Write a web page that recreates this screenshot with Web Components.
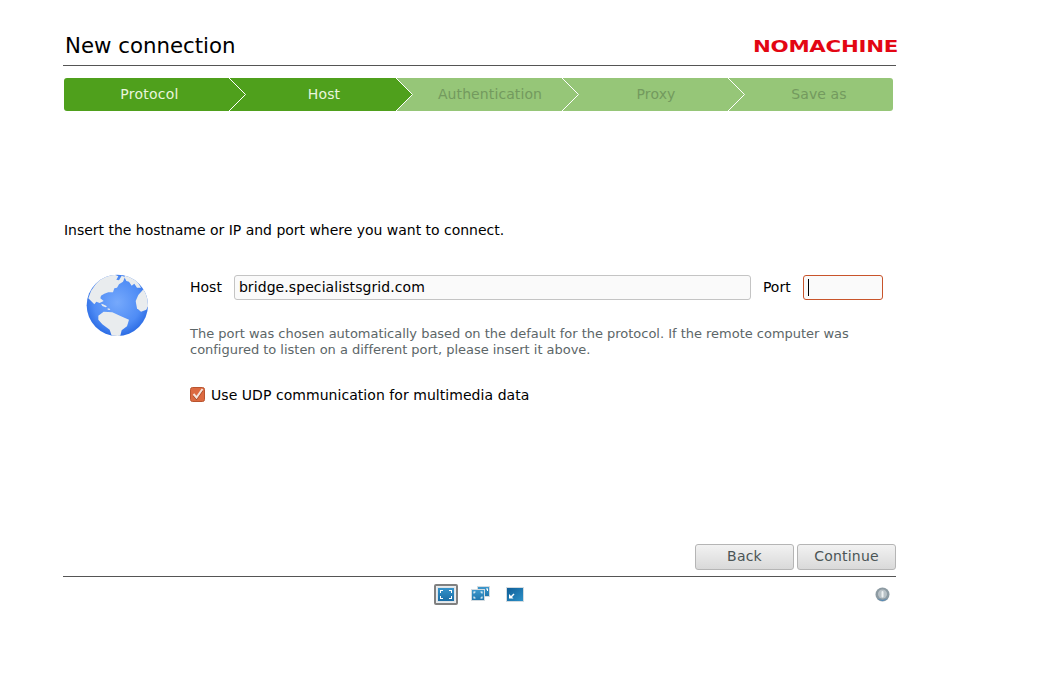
<!DOCTYPE html>
<html>
<head>
<meta charset="utf-8">
<title>New connection</title>
<style>
html, body { margin: 0; background: #fff; }
body { font-family: "DejaVu Sans", sans-serif; color: #000; }
</style>
</head>
<body>
<nx-page>
	<nx-header slot="header" title="New connection"></nx-header>
	<nx-steps slot="steps">
		<nx-step active first>Protocol</nx-step>
		<nx-step active>Host</nx-step>
		<nx-step>Authentication</nx-step>
		<nx-step>Proxy</nx-step>
		<nx-step last>Save as</nx-step>
	</nx-steps>
	<nx-host-form slot="main" host="bridge.specialistsgrid.com"></nx-host-form>
	<nx-footer slot="footer"></nx-footer>
</nx-page>

<script>
class nxPage extends HTMLElement {
	constructor() {
		super();
		this.attachShadow({ mode: 'open' });
		this.shadowRoot.innerHTML = `
		<style>
		:host { display: block; width: 833px; height: 674px; margin-left: 63px; }
		.wrap { display: flex; flex-direction: column; height: 100%; }
		.main { flex: 1; }
		</style>
		<div class="wrap">
			<slot name="header"></slot>
			<slot name="steps"></slot>
			<div class="main"><slot name="main"></slot></div>
			<slot name="footer"></slot>
		</div>`;
	}
}

class nxHeader extends HTMLElement {
	constructor() {
		super();
		this.attachShadow({ mode: 'open' });
		this.shadowRoot.innerHTML = `
		<style>
		:host { display: flex; justify-content: space-between; align-items: center; box-sizing: border-box; height: 66px; padding: 33px 0 6px 2px; border-bottom: 1px solid #555; }
		h1 { margin: 0; font: normal 21.3px/26px "DejaVu Sans", sans-serif; color: #000; }
		.logo { width: 144px; height: 14px; margin-right: -1px; }
		.logo span { display: block; width: max-content; font: bold 14px/14px "DejaVu Sans", sans-serif; color: #e30613; white-space: nowrap; transform-origin: 0 50%; transform: scale(1.525, 1.15); letter-spacing: -0.2px; }
		</style>
		<h1></h1>
		<div class="logo"><span>NOMACHINE</span></div>`;
		this.shadowRoot.querySelector('h1').innerText = this.getAttribute('title');
	}
}

class nxSteps extends HTMLElement {
	constructor() {
		super();
		this.attachShadow({ mode: 'open' });
		this.shadowRoot.innerHTML = `
		<style>
		:host { display: flex; height: 33px; width: 829px; margin: 12px 0 0 1px; border-radius: 3px; overflow: hidden; }
		</style>
		<slot></slot>`;
	}
}

class nxStep extends HTMLElement {
	constructor() {
		super();
		this.attachShadow({ mode: 'open' });
		this.shadowRoot.innerHTML = `
		<style>
		:host { display: flex; align-items: center; justify-content: center; position: relative; box-sizing: border-box; width: 166px; height: 33px; padding: 0 0 2px 20px; font-size: 14px; letter-spacing: 0.1px; background: #96c678; color: #739a5e; }
		:host([active]) { background: #4fa01c; color: #e9f5dd; width: 167px; padding-left: 21px; }
		:host([first]) { width: 166px; padding-left: 5px; letter-spacing: 0.25px; }
		:host([last]) { width: 164px; padding-left: 16px; }
		svg { position: absolute; right: -17px; top: 0; z-index: 1; }
		:host([last]) svg { display: none; }
		</style>
		<slot></slot>
		<svg width="18" height="33" viewBox="0 0 18 33">
			<path class="fill" d="M0 0L16.5 16.5L0 33Z"/>
			<path d="M0 0L16.5 16.5L0 33" fill="none" stroke="#fff" stroke-width="1"/>
		</svg>`;
		const fill = this.hasAttribute('active') ? '#4fa01c' : '#96c678';
		this.shadowRoot.querySelector('.fill').setAttribute('fill', fill);
	}
}

class nxGlobe extends HTMLElement {
	constructor() {
		super();
		this.attachShadow({ mode: 'open' });
		this.shadowRoot.innerHTML = `
		<style>:host { display: block; width: 76px; height: 76px; }</style>
		<svg width="76" height="76" viewBox="0 0 228 228">
			<defs>
				<radialGradient id="sea" cx="0.5" cy="0.45" r="0.55">
					<stop offset="0" stop-color="#76a9fc"/>
					<stop offset="0.7" stop-color="#4f8cf5"/>
					<stop offset="1" stop-color="#2c6ce4"/>
				</radialGradient>
				<clipPath id="ball"><circle cx="115" cy="115" r="92"/></clipPath>
			</defs>
			<circle cx="115" cy="115" r="92" fill="url(#sea)"/>
			<g fill="#e9ecee" clip-path="url(#ball)">
				<path d="M66 34L84 26L104 22L118 28L112 38L120 40L128 26L138 30L132 44L120 52L114 62L106 64L102 76L88 76L76 80L66 86L64 94L74 102L62 108L52 104L46 112L34 100L28 94L36 72L50 52Z"/>
				<path d="M140 22L156 26L174 42L186 62L174 62L166 50L158 56L150 44L142 42L136 30Z"/>
				<path d="M178 84L194 66L206 84L212 108L202 128L186 134L174 124L170 102Z"/>
				<path d="M58 146L74 134L100 136L126 148L150 158L144 178L128 190L122 214L100 212L92 188L70 172L58 158Z"/>
				<path d="M66 110L72 112L84 118L80 121L70 117Z"/>
				<path d="M86 124L94 126L92 129L86 128Z"/>
			</g>
		</svg>`;
	}
}

class nxHostForm extends HTMLElement {
	constructor() {
		super();
		this.attachShadow({ mode: 'open' });
		this.shadowRoot.innerHTML = `
		<style>
		:host { display: block; padding: 111px 0 0 1px; font-size: 14px; color: #000; }
		p { margin: 0; }
		.intro { line-height: 17px; letter-spacing: -0.02px; }
		.body { display: flex; margin-top: 35px; }
		nx-globe { margin: -7px 35px 0 15px; flex: none; }
		.col { width: 694px; }
		.row { display: flex; align-items: flex-end; height: 26px; }
		.row span { align-self: center; }
		.field { box-sizing: border-box; height: 25px; border: 1px solid #c4c4c4; border-radius: 3px; background: #fafafa; padding-left: 4px; line-height: 22px; }
		.host { width: 517px; margin: 0 12px 0 12px; letter-spacing: 0.08px; }
		.port { width: 80px; margin-left: 12px; border-color: #c8542b; position: relative; }
		.caret { position: absolute; left: 4px; top: 3px; width: 1px; height: 17px; background: #000; }
		.note { margin-top: 26px; font-size: 13px; line-height: 16px; color: #5c6668; letter-spacing: -0.02px; }
		.udp { display: flex; align-items: center; gap: 6px; margin-top: 28px; height: 17px; letter-spacing: 0.05px; }
		.box { width: 15px; height: 15px; }
		</style>
		<p class="intro">Insert the hostname or IP and port where you want to connect.</p>
		<div class="body">
			<nx-globe></nx-globe>
			<div class="col">
				<div class="row">
					<span>Host</span>
					<div class="field host"></div>
					<span>Port</span>
					<div class="field port"><div class="caret"></div></div>
				</div>
				<p class="note">The port was chosen automatically based on the default for the protocol. If the remote computer was configured to listen on a different port, please insert it above.</p>
				<div class="udp">
					<svg class="box" viewBox="0 0 15 15">
						<rect x="0.5" y="0.5" width="14" height="14" rx="2" fill="#dc6a41" stroke="#b9542f"/>
						<path d="M3.500 8.500L6.500 12L12.500 3.500" fill="none" stroke="#9c4423" stroke-width="1.500"/>
						<path d="M3.500 7L6.500 10.500L12.500 2" fill="none" stroke="#f6e3da" stroke-width="2"/>
					</svg>
					<span>Use UDP communication for multimedia data</span>
				</div>
			</div>
		</div>`;
		this.shadowRoot.querySelector('.host').innerText = this.getAttribute('host');
	}
}

class nxButton extends HTMLElement {
	constructor() {
		super();
		this.attachShadow({ mode: 'open' });
		this.shadowRoot.innerHTML = `
		<style>
		:host { display: flex; align-items: center; justify-content: center; box-sizing: border-box; width: 99px; height: 26px; padding-bottom: 2px; border: 1px solid #b5b5b5; border-radius: 3px; background: linear-gradient(#f2f2f2, #d9d9d9); color: #4b5556; font-size: 14px; letter-spacing: 0.2px; }
		</style>
		<slot></slot>`;
	}
}

class nxFooter extends HTMLElement {
	constructor() {
		super();
		this.attachShadow({ mode: 'open' });
		this.shadowRoot.innerHTML = `
		<style>
		:host { display: block; height: 130px; }
		.buttons { display: flex; justify-content: flex-end; gap: 3px; height: 32px; border-bottom: 1px solid #555; }
		.bar { display: flex; align-items: flex-start; position: relative; padding: 7px 0 0 371px; }
		.sel { box-sizing: border-box; width: 24px; height: 21px; border: 2px solid #808080; border-radius: 2px; background: #e8ecef; display: flex; align-items: center; justify-content: center; }
		.gap1 { margin-left: 13px; margin-top: 2px; }
		.gap2 { margin-left: 16px; margin-top: 3px; }
		.info { position: absolute; right: 6px; top: 10px; }
		</style>
		<div class="buttons"><nx-button>Back</nx-button><nx-button>Continue</nx-button></div>
		<div class="bar">
			<div class="sel">
				<svg width="18" height="15" viewBox="0 0 18 15">
					<defs><linearGradient id="a" x1="0" y1="0" x2="0" y2="1"><stop offset="0" stop-color="#3594cc"/><stop offset="1" stop-color="#1a6ca4"/></linearGradient></defs>
					<rect x="0.5" y="0.5" width="17" height="14" fill="url(#a)" stroke="#dde3e7"/>
					<path d="M3 3h3v1H4v2H3zM15 3h-3v1h2v2h1zM3 12h3v-1H4V9H3zM15 12h-3v-1h2V9h1z" fill="#fff"/>
				</svg>
			</div>
			<svg class="gap1" width="19" height="15" viewBox="0 0 19 15">
				<defs><linearGradient id="c" x1="0" y1="0" x2="0" y2="1"><stop offset="0" stop-color="#3f9ace"/><stop offset="1" stop-color="#2076ad"/></linearGradient></defs>
				<rect x="6.500" y="0.500" width="12" height="10" fill="url(#c)" stroke="#d3dbe0"/>
				<rect x="0.500" y="3.500" width="13" height="11" fill="url(#c)" stroke="#d3dbe0"/>
				<path d="M2.500 5.500h2v1h-1v1h-1zM11.500 5.500h-2v1h1v1h1zM2.500 12.500h2v-1h-1v-1h-1zM11.500 12.500h-2v-1h1v-1h1z" fill="#fff"/>
				<path d="M15 2.500h2v2.500h-1V3.500h-1z" fill="#fff"/>
			</svg>
			<svg class="gap2" width="18" height="15" viewBox="0 0 18 15">
				<defs><linearGradient id="b" x1="0" y1="0" x2="1" y2="1"><stop offset="0" stop-color="#0e5c96"/><stop offset="1" stop-color="#2c92c9"/></linearGradient></defs>
				<rect x="0.500" y="0.500" width="17" height="14" fill="url(#b)" stroke="#d3dbe0"/>
				<path d="M3 7v4.500h4.500l-1.500-1.500 2.500-2.500-1-1-2.500 2.500z" fill="#fff"/>
			</svg>
			<svg class="info" width="15" height="15" viewBox="0 0 15 15">
				<circle cx="7.500" cy="7.500" r="7" fill="#8d9ba3"/>
				<path d="M2 11a7 7 0 0 0 11 0a7 5 0 0 1-11 0z" fill="#3b83c4"/>
				<circle cx="7.500" cy="7" r="4.500" fill="#b9c2c7"/>
				<rect x="6.500" y="4" width="2" height="6.500" rx="1" fill="#eef1f2"/>
			</svg>
		</div>`;
	}
}

window.customElements.define('nx-page', nxPage);
window.customElements.define('nx-header', nxHeader);
window.customElements.define('nx-steps', nxSteps);
window.customElements.define('nx-step', nxStep);
window.customElements.define('nx-globe', nxGlobe);
window.customElements.define('nx-host-form', nxHostForm);
window.customElements.define('nx-button', nxButton);
window.customElements.define('nx-footer', nxFooter);
</script>
</body>
</html>
